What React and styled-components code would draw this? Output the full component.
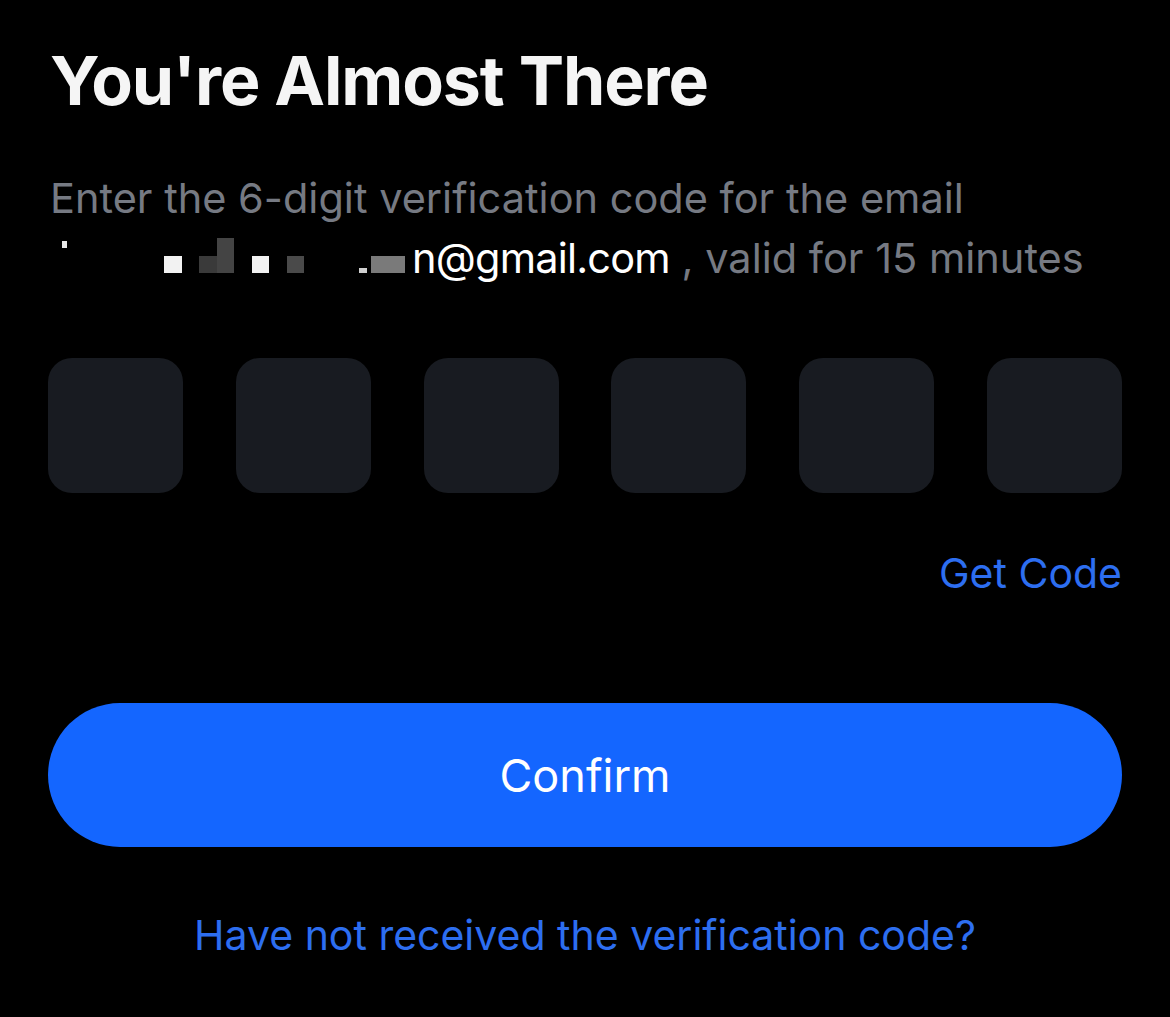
import styled, { createGlobalStyle } from 'styled-components';

const GlobalStyle = createGlobalStyle`
    html, body {
        margin: 0;
        padding: 0;
        background: #000;
    }
    body {
        font-family: Inter, "Liberation Sans", sans-serif;
        -webkit-font-smoothing: antialiased;
    }
`;

const Screen = styled.div`
    width: 1170px;
    height: 1017px;
    box-sizing: border-box;
    background: #000;
    padding: 36px 48px 0 48px;
    display: flex;
    flex-direction: column;
    overflow: hidden;
`;

const Title = styled.h1`
    margin: 0 0 0 2px;
    color: #f5f5f5;
    font-weight: 700;
    font-size: 68px;
    line-height: 88px;
    letter-spacing: -1.1px;
`;

const Description = styled.p`
    margin: 44px 0 0 2px;
    color: #767a83;
    font-size: 41.5px;
    line-height: 60px;
    font-weight: 400;
    letter-spacing: 0;
`;

const Email = styled.span`
    color: #fff;
    letter-spacing: -0.8px;
`;

// blurred part of the address, drawn as the mosaic blocks of the screenshot
const Redacted = styled.span`
    display: inline-block;
    overflow: hidden;
    width: 362px;
    height: 36px;
    vertical-align: baseline;
`;

const PixelRow = styled.span`
    display: flex;
    align-items: flex-end;
    height: 100%;
`;

const Pixel = styled.span`
    display: block;
    flex: none;
    width: ${p => p.w}px;
    height: ${p => p.h}px;
    margin-left: ${p => p.gap}px;
    margin-bottom: ${p => p.lift || 0}px;
    background: ${p => p.color};
`;

const CodeRow = styled.div`
    margin-top: 70px;
    display: flex;
    justify-content: space-between;
`;

const CodeBox = styled.div`
    width: 135px;
    height: 135px;
    border-radius: 24px;
    background: #181b21;
`;

const LinkRow = styled.div`
    display: flex;
    justify-content: ${p => p.center ? 'center' : 'flex-end'};
    margin-top: ${p => p.top}px;
`;

const TextLink = styled.span`
    color: #2d6ef0;
    font-size: 41px;
    line-height: 48px;
    font-weight: 400;
    cursor: pointer;
`;

const ConfirmButton = styled.button`
    margin-top: 106px;
    width: 100%;
    height: 144px;
    border: none;
    border-radius: 72px;
    background: #1466ff;
    color: #fff;
    font-family: inherit;
    font-size: 45px;
    font-weight: 400;
    cursor: pointer;
`;

export default function App() {
    return <>
        <GlobalStyle />
        <Screen>
            <Title>You're Almost There</Title>
            <Description>
                Enter the 6-digit verification code for the email
                <br />
                <Redacted>
                    <PixelRow>
                        <Pixel w={5} h={7} gap={12} lift={25} color="#e8e8e8" />
                        <Pixel w={18} h={17} gap={97} color="#f2f2f2" />
                        <Pixel w={18} h={17} gap={17} color="#3a3a3a" />
                        <Pixel w={17} h={35} gap={0} color="#444" />
                        <Pixel w={17} h={17} gap={18} color="#f2f2f2" />
                        <Pixel w={17} h={17} gap={18} color="#4a4a4a" />
                        <Pixel w={8} h={5} gap={55} color="#cfcfcf" />
                        <Pixel w={34} h={17} gap={4} color="#7a7a7a" />
                    </PixelRow>
                </Redacted>
                <Email>n@gmail.com</Email> , valid for 15 minutes
            </Description>
            <CodeRow>
                {[0, 1, 2, 3, 4, 5].map(i => <CodeBox key={i} />)}
            </CodeRow>
            <LinkRow top={56}>
                <TextLink>Get Code</TextLink>
            </LinkRow>
            <ConfirmButton>Confirm</ConfirmButton>
            <LinkRow center top={64}>
                <TextLink>Have not received the verification code?</TextLink>
            </LinkRow>
        </Screen>
    </>
}
